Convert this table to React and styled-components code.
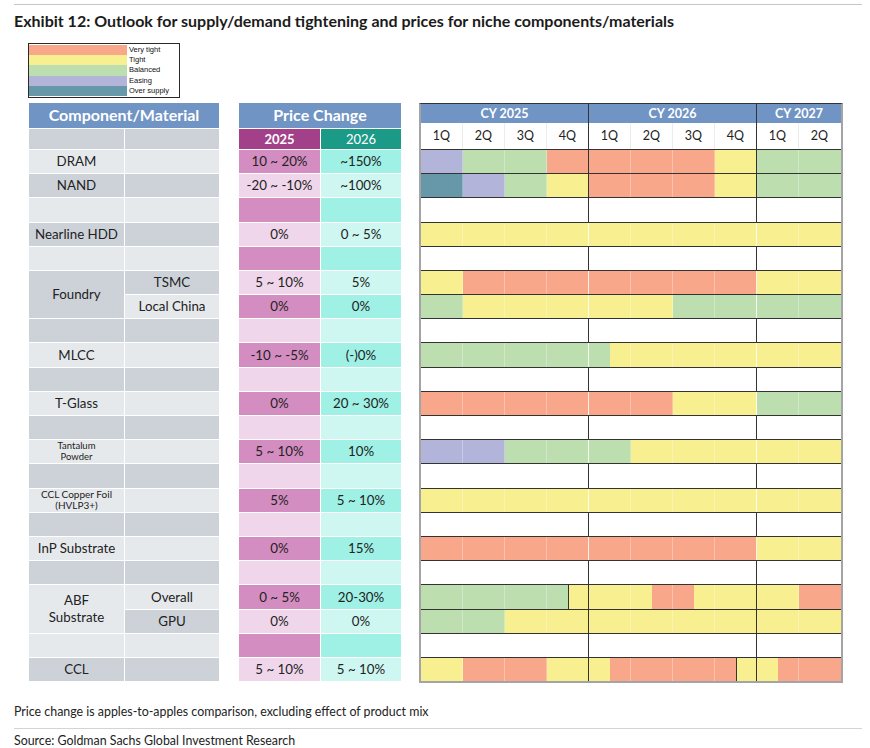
import React from "react";
import styled, { createGlobalStyle } from "styled-components";

const GlobalStyle = createGlobalStyle`
  body {
    margin: 0;
    background: #fff;
    font-family: Lato, "Open Sans", sans-serif;
    color: #222;
  }
`;

const Q = 42;

const COLORS = {
  vt: "#f9a78a",
  t: "#f8ef90",
  b: "#bddeae",
  e: "#b2b4da",
  o: "#6798a9",
};

const LEGEND = [
  ["vt", "Very tight"],
  ["t", "Tight"],
  ["b", "Balanced"],
  ["e", "Easing"],
  ["o", "Over supply"],
];

const ROWS = [
  { main: "DRAM", p25: "10 ~ 20%", p26: "~150%", yd: true, bars: [["e", 1], ["b", 2], ["vt", 4], ["t", 1], ["b", 2]] },
  { main: "NAND", p25: "-20 ~ -10%", p26: "~100%", yd: true, bars: [["o", 1], ["e", 1], ["b", 1], ["t", 1], ["vt", 3], ["t", 1], ["b", 2]] },
  {},
  { main: "Nearline HDD", p25: "0%", p26: "0 ~ 5%", bars: [["t", 10]] },
  {},
  { main: "Foundry", span: 2, sub: "TSMC", p25: "5 ~ 10%", p26: "5%", bars: [["t", 1], ["vt", 7], ["t", 2]] },
  { sub: "Local China", p25: "0%", p26: "0%", bars: [["b", 1], ["t", 5], ["b", 4]] },
  {},
  { main: "MLCC", p25: "-10 ~ -5%", p26: "(-)0%", bars: [["b", 4.5], ["t", 5.5]] },
  {},
  { main: "T-Glass", p25: "0%", p26: "20 ~ 30%", bars: [["vt", 6], ["t", 2], ["b", 2]] },
  {},
  { main: "Tantalum\nPowder", size: 9.5, p25: "5 ~ 10%", p26: "10%", bars: [["e", 2], ["b", 3], ["t", 5]] },
  {},
  { main: "CCL Copper Foil\n(HVLP3+)", size: 10, p25: "5%", p26: "5 ~ 10%", bars: [["t", 10]] },
  {},
  { main: "InP Substrate", p25: "0%", p26: "15%", bars: [["vt", 8], ["t", 2]] },
  {},
  { main: "ABF\nSubstrate", span: 2, sub: "Overall", p25: "0 ~ 5%", p26: "20-30%", yd: true, bars: [["b", 3.5], ["t", 2, true], ["vt", 1], ["t", 2.5], ["vt", 1]] },
  { sub: "GPU", p25: "0%", p26: "0%", yd: true, bars: [["b", 2], ["t", 8]] },
  {},
  { main: "CCL", p25: "5 ~ 10%", p26: "5 ~ 10%", yd: true, bars: [["t", 1], ["vt", 2], ["t", 1.5], ["vt", 3], ["t", 1, true], ["vt", 1.5]] },
];

const Page = styled.div`
  width: 870px;
  padding: 4px 8px 0 14px;
  box-sizing: border-box;
`;

const Rule = styled.div`
  width: 848px;
  height: 1px;
  background: #c6c6c6;
`;

const Title = styled.h1`
  margin: 7px 0 0;
  font-size: 16px;
  line-height: 18px;
  font-weight: 700;
  color: #1b1b1b;
`;

const Legend = styled.div`
  margin: 13px 0 0 14px;
  width: 150px;
  border: 1px solid #2a2a2a;
  padding: 1px 0;
  display: flex;
  flex-direction: column;
`;

const LegendRow = styled.div`
  display: flex;
  align-items: center;
  height: 10.2px;
`;

const Swatch = styled.div`
  width: 98px;
  height: 100%;
  background: ${(p) => COLORS[p.$c]};
`;

const LegendLabel = styled.span`
  margin-left: 2px;
  font-family: "Liberation Sans", Arial, sans-serif;
  font-size: 7.5px;
  line-height: 10px;
  color: #111;
`;

const Tables = styled.div`
  display: flex;
  align-items: flex-start;
  margin: 5px 0 0 15px;
`;

const Grid = styled.div`
  display: grid;
  grid-template-columns: ${(p) => p.$cols};
  grid-template-rows: 25px 20px repeat(22, 23.2px);
  gap: 1px;
  margin-right: ${(p) => p.$gap}px;
`;

const TONES = {
  head: "#7094c4",
  dark: "#cdd2d9",
  light: "#e6e9ec",
  y25: "#a3408a",
  y26: "#1b9a88",
  pinkDark: "#d48dc0",
  pinkLight: "#f0d6ea",
  tealDark: "#9ff0e5",
  tealLight: "#cff7f1",
};

const Cell = styled.div`
  grid-column: ${(p) => p.$col || "auto"};
  grid-row: ${(p) => (p.$span ? `span ${p.$span}` : "auto")};
  background: ${(p) => TONES[p.$tone]};
  display: flex;
  align-items: center;
  justify-content: center;
  text-align: center;
  white-space: pre-line;
  font-size: ${(p) => p.$size || 13.3}px;
  line-height: ${(p) => (p.$size ? 1.15 : 1.25)};
  color: #222;
`;

const HeadCell = styled(Cell)`
  color: #fff;
  font-weight: 700;
  font-size: 16px;
`;

const YearCell = styled(Cell)`
  color: #fff;
  font-weight: ${(p) => (p.$bold ? 700 : 400)};
  font-size: 13px;
`;

const Gantt = styled.div`
  margin-left: 18px;
  width: ${10 * Q}px;
  border-top: 1px solid #333;
  border-left: 2px solid #a4a4a4;
  border-right: 2px solid #a4a4a4;
  border-bottom: 2px solid #a4a4a4;
`;

const CyRow = styled.div`
  display: flex;
  height: 19px;
  background: #7094c4;
`;

const CyCell = styled.div`
  width: ${(p) => p.$q * Q}px;
  box-sizing: border-box;
  border-right: ${(p) => (p.$last ? "none" : "1px solid #333")};
  display: flex;
  align-items: center;
  justify-content: center;
  color: #fff;
  font-weight: 700;
  font-size: 12.5px;
`;

const QuarterRow = styled.div`
  display: flex;
  height: 26px;
  border-bottom: 1px solid #333;
`;

const QuarterCell = styled.div`
  width: ${Q}px;
  box-sizing: border-box;
  border-right: 1px solid ${(p) => (p.$year ? "#333" : p.$last ? "transparent" : "#ececec")};
  display: flex;
  align-items: center;
  justify-content: center;
  font-size: 12.5px;
  color: #222;
`;

const BarRow = styled.div`
  position: relative;
  display: flex;
  height: 23.2px;
  background: #fff;
  &:not(:last-child) {
    border-bottom: 1px solid #333;
  }
`;

const Seg = styled.div`
  width: ${(p) => p.$q * Q}px;
  box-sizing: border-box;
  background: ${(p) => COLORS[p.$c]};
  border-left: ${(p) => (p.$dark ? "1px solid #333" : "none")};
`;

const Ticks = styled.div`
  position: absolute;
  inset: 0;
  display: flex;
  pointer-events: none;
`;

const Tick = styled.div`
  width: ${Q}px;
  box-sizing: border-box;
  border-right: 1px solid ${(p) => p.$color};
`;

const Note = styled.p`
  margin: 21px 0 0;
  font-size: 12.4px;
  line-height: 15px;
  color: #222;
`;

const NoteRule = styled.div`
  height: 9px;
`;

const Source = styled.p`
  margin: 0;
  padding-top: 4px;
  border-top: 1px solid #d4d4d4;
  width: 848px;
  font-size: 12.4px;
  line-height: 15px;
  color: #222;
`;

function tickColor(i, row) {
  const empty = !row.bars;
  if (i === 9) return "transparent";
  if (i === 3 || i === 7) {
    if (empty || row.yd) return "#333";
    return "rgba(255,255,255,0.85)";
  }
  return empty ? "transparent" : "rgba(255,255,255,0.3)";
}

const ComponentTable = () => (
  <Grid $cols="95px 94px" $gap={20}>
    <HeadCell $col="1 / -1" $tone="head">Component/Material</HeadCell>
    <Cell $tone="dark" />
    <Cell $tone="dark" />
    {ROWS.map((r, i) => {
      const tone = i % 2 === 0 ? "light" : "dark";
      const cells = [];
      if (r.span) {
        cells.push(
          <Cell key={`m${i}`} $tone={tone} $span={2} $size={r.size}>
            {r.main}
          </Cell>
        );
      } else if (!ROWS[i - 1] || !ROWS[i - 1].span) {
        cells.push(
          <Cell key={`m${i}`} $tone={tone} $size={r.size}>
            {r.main}
          </Cell>
        );
      }
      cells.push(
        <Cell key={`s${i}`} $col={2} $tone={tone}>
          {r.sub}
        </Cell>
      );
      return cells;
    })}
  </Grid>
);

const PriceTable = () => (
  <Grid $cols="81px 80px" $gap={0}>
    <HeadCell $col="1 / -1" $tone="head">Price Change</HeadCell>
    <YearCell $tone="y25" $bold>2025</YearCell>
    <YearCell $tone="y26">2026</YearCell>
    {ROWS.map((r, i) => {
      const dark = i % 2 === 0;
      return [
        <Cell key={`a${i}`} $tone={dark ? "pinkDark" : "pinkLight"}>
          {r.p25}
        </Cell>,
        <Cell key={`b${i}`} $tone={dark ? "tealDark" : "tealLight"}>
          {r.p26}
        </Cell>,
      ];
    })}
  </Grid>
);

const OutlookChart = () => (
  <Gantt>
    <CyRow>
      <CyCell $q={4}>CY 2025</CyCell>
      <CyCell $q={4}>CY 2026</CyCell>
      <CyCell $q={2} $last>CY 2027</CyCell>
    </CyRow>
    <QuarterRow>
      {["1Q", "2Q", "3Q", "4Q", "1Q", "2Q", "3Q", "4Q", "1Q", "2Q"].map((q, i) => (
        <QuarterCell key={i} $year={i === 3 || i === 7} $last={i === 9}>
          {q}
        </QuarterCell>
      ))}
    </QuarterRow>
    {ROWS.map((r, i) => (
      <BarRow key={i}>
        {(r.bars || []).map(([c, q, dark], j) => (
          <Seg key={j} $c={c} $q={q} $dark={dark} />
        ))}
        <Ticks>
          {Array.from({ length: 10 }, (_, k) => (
            <Tick key={k} $color={tickColor(k, r)} />
          ))}
        </Ticks>
      </BarRow>
    ))}
  </Gantt>
);

export default function App() {
  return (
    <Page>
      <GlobalStyle />
      <Rule />
      <Title>
        Exhibit 12: Outlook for supply/demand tightening and prices for niche components/materials
      </Title>
      <Legend>
        {LEGEND.map(([c, label]) => (
          <LegendRow key={c}>
            <Swatch $c={c} />
            <LegendLabel>{label}</LegendLabel>
          </LegendRow>
        ))}
      </Legend>
      <Tables>
        <ComponentTable />
        <PriceTable />
        <OutlookChart />
      </Tables>
      <Note>Price change is apples-to-apples comparison, excluding effect of product mix</Note>
      <NoteRule />
      <Source>Source: Goldman Sachs Global Investment Research</Source>
    </Page>
  );
}
